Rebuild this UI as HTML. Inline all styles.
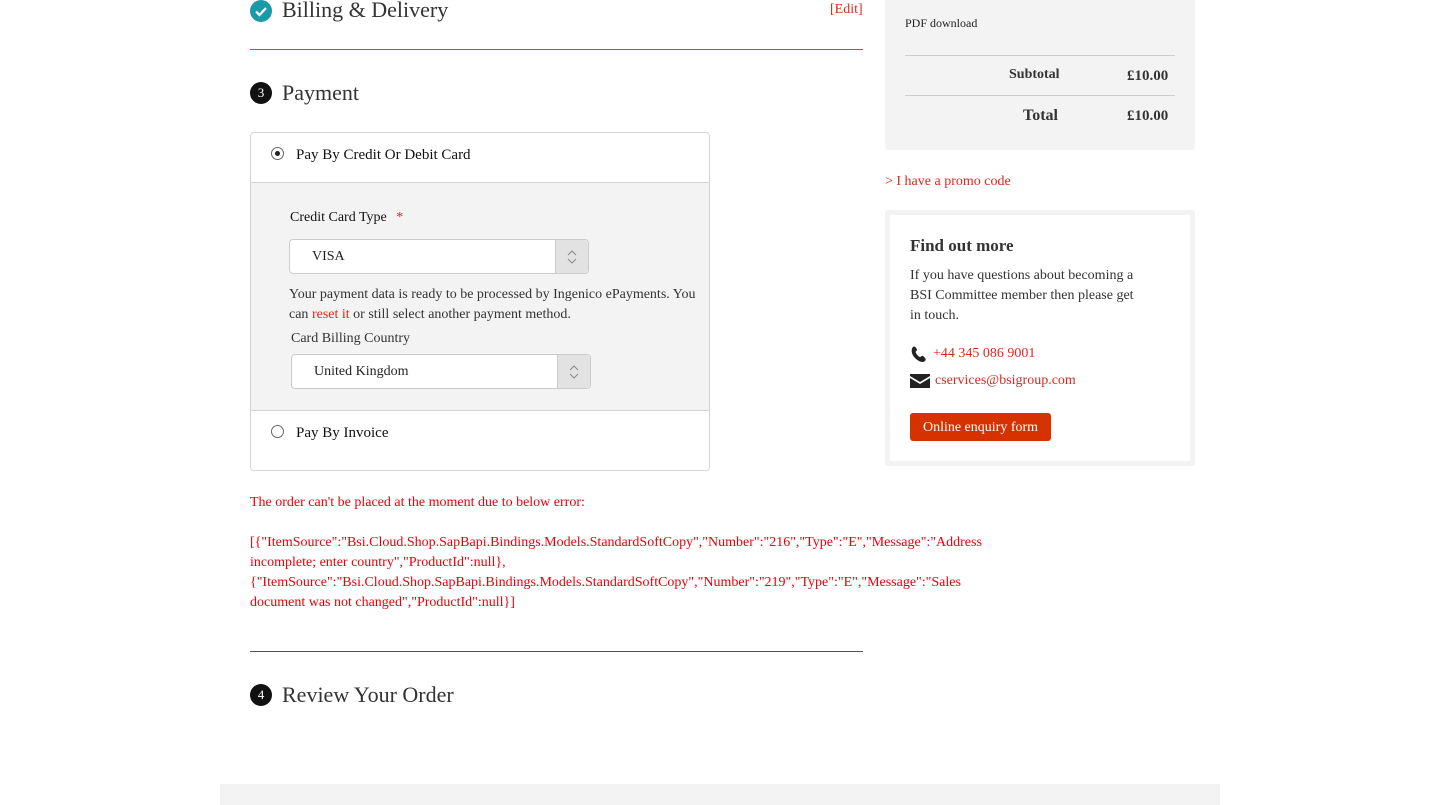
<!DOCTYPE html>
<html><head><meta charset="utf-8"><style>
body{margin:0;width:1440px;height:805px;position:relative;background:#fff;font-family:"Liberation Serif",serif;color:#222;overflow:hidden}
.a{position:absolute}
.red{color:#d52b1e}
h2{margin:0;font-weight:normal;font-size:22px;color:#333}
.num{width:22px;height:22px;border-radius:50%;background:#111;color:#fff;font-size:13px;text-align:center;line-height:22px}
.sel{background:#fff;border:1px solid #ccc;border-radius:4px;height:35px;box-sizing:border-box;font-size:14px;line-height:33px;padding-left:22px}
.sel .btn{position:absolute;right:0;top:0;width:32px;height:33px;background:#e2e2e2;border-left:1px solid #ccc;border-radius:0 4px 4px 0}
.radio{width:11px;height:11px;border:1px solid #666;border-radius:50%;background:#fff}
</style></head><body>
<div class="a" style="left:250px;top:0;width:22px;height:22px;border-radius:50%;background:#1a9aa6"><svg width="22" height="22"><path d="M6 11.5l3.5 3.5 6.5-7" stroke="#fff" stroke-width="2.2" fill="none"/></svg></div>
<h2 class="a" style="left:282px;top:-3px">Billing &amp; Delivery</h2>
<div class="a red" style="left:830px;top:2px;font-size:14px">[Edit]</div>
<div class="a" style="left:250px;top:49px;width:613px;height:1px;background:#1a8f99"></div>
<div class="a num" style="left:250px;top:82px">3</div>
<h2 class="a" style="left:282px;top:80px">Payment</h2>
<div class="a" style="left:250px;top:132px;width:458px;height:337px;border:1px solid #d4d4d4;border-radius:4px"></div>
<div class="a" style="left:251px;top:182px;width:458px;height:227px;background:#f3f3f3;border-top:1px solid #d4d4d4;border-bottom:1px solid #d4d4d4"></div>
<div class="a radio" style="left:271px;top:147px"><div style="width:5px;height:5px;background:#222;border-radius:50%;margin:3px"></div></div>
<div class="a" style="left:296px;top:147px;font-size:15px;color:#111">Pay By Credit Or Debit Card</div>
<div class="a" style="left:290px;top:210px;font-size:14px;color:#111">Credit Card Type <span class="red" style="margin-left:6px">*</span></div>
<div class="a sel" style="left:289px;top:239px;width:300px">VISA<div class="btn"><svg width="32" height="33"><path d="M12 15l4-4 4 4M12 19l4 4 4-4" stroke="#888" fill="none"/></svg></div></div>
<div class="a" style="left:289px;top:285px;width:420px;font-size:14px;line-height:20px;color:#333">Your payment data is ready to be processed by Ingenico ePayments. You can <span class="red">reset it</span> or still select another payment method.</div>
<div class="a" style="left:291px;top:331px;font-size:14px;color:#333">Card Billing Country</div>
<div class="a sel" style="left:291px;top:354px;width:300px">United Kingdom<div class="btn"><svg width="32" height="33"><path d="M12 15l4-4 4 4M12 19l4 4 4-4" stroke="#888" fill="none"/></svg></div></div>
<div class="a radio" style="left:271px;top:425px"></div>
<div class="a" style="left:296px;top:425px;font-size:15px;color:#111">Pay By Invoice</div>
<div class="a" style="left:250px;top:493px;width:740px;font-size:14px;line-height:20px;color:#e8000b">The order can't be placed at the moment due to below error:<br><br>[{"ItemSource":"Bsi.Cloud.Shop.SapBapi.Bindings.Models.StandardSoftCopy","Number":"216","Type":"E","Message":"Address incomplete; enter country","ProductId":null},<br>{"ItemSource":"Bsi.Cloud.Shop.SapBapi.Bindings.Models.StandardSoftCopy","Number":"219","Type":"E","Message":"Sales document was not changed","ProductId":null}]</div>
<div class="a" style="left:250px;top:651px;width:613px;height:1px;background:#555"></div>
<div class="a num" style="left:250px;top:684px">4</div>
<h2 class="a" style="left:282px;top:682px">Review Your Order</h2>
<div class="a" style="left:885px;top:0;width:310px;height:150px;background:#f3f3f3;border-radius:0 0 4px 4px"></div>
<div class="a" style="left:905px;top:16px;font-size:12px">PDF download</div>
<div class="a" style="left:905px;top:55px;width:270px;height:1px;background:#ccc"></div>
<div class="a" style="left:905px;top:95px;width:270px;height:1px;background:#ccc"></div>
<div class="a" style="left:1009px;top:67px;font-size:14px;font-weight:bold;color:#333">Subtotal</div>
<div class="a" style="left:1127px;top:68px;font-size:15px;font-weight:bold;color:#333">£10.00</div>
<div class="a" style="left:1023px;top:107px;font-size:16px;font-weight:bold;color:#333">Total</div>
<div class="a" style="left:1127px;top:108px;font-size:15px;font-weight:bold;color:#333">£10.00</div>
<div class="a red" style="left:885px;top:174px;font-size:14px">&gt; I have a promo code</div>
<div class="a" style="left:885px;top:210px;width:300px;height:246px;border:5px solid #f3f3f3;border-radius:3px"></div>
<div class="a" style="left:910px;top:236px;font-size:17px;font-weight:bold;color:#333">Find out more</div>
<div class="a" style="left:910px;top:266px;width:236px;font-size:14px;line-height:20px;color:#333">If you have questions about becoming a BSI Committee member then please get in touch.</div>
<svg class="a" style="left:910px;top:345px" width="20" height="18" viewBox="0 0 20 18"><path d="M3 2c2-2 4 2 4 3s-2 1-1 3 3 4 4 4 2-2 3-1 4 3 2 5-6 1-10-3S1 4 3 2z" fill="#222"/></svg>
<div class="a red" style="left:933px;top:346px;font-size:14px">+44 345 086 9001</div>
<svg class="a" style="left:910px;top:374px" width="20" height="14"><path d="M0 0h20v2l-10 6L0 2z M0 4l10 6 10-6v10H0z" fill="#222"/></svg>
<div class="a red" style="left:935px;top:373px;font-size:14px">cservices@bsigroup.com</div>
<div class="a" style="left:910px;top:413px;width:141px;height:28px;background:#d63200;border-radius:3px;color:#fff;font-size:14px;line-height:30px;text-align:center">Online enquiry form</div>
<div class="a" style="left:220px;top:784px;width:1000px;height:21px;background:#f3f3f3"></div>
</body></html>
